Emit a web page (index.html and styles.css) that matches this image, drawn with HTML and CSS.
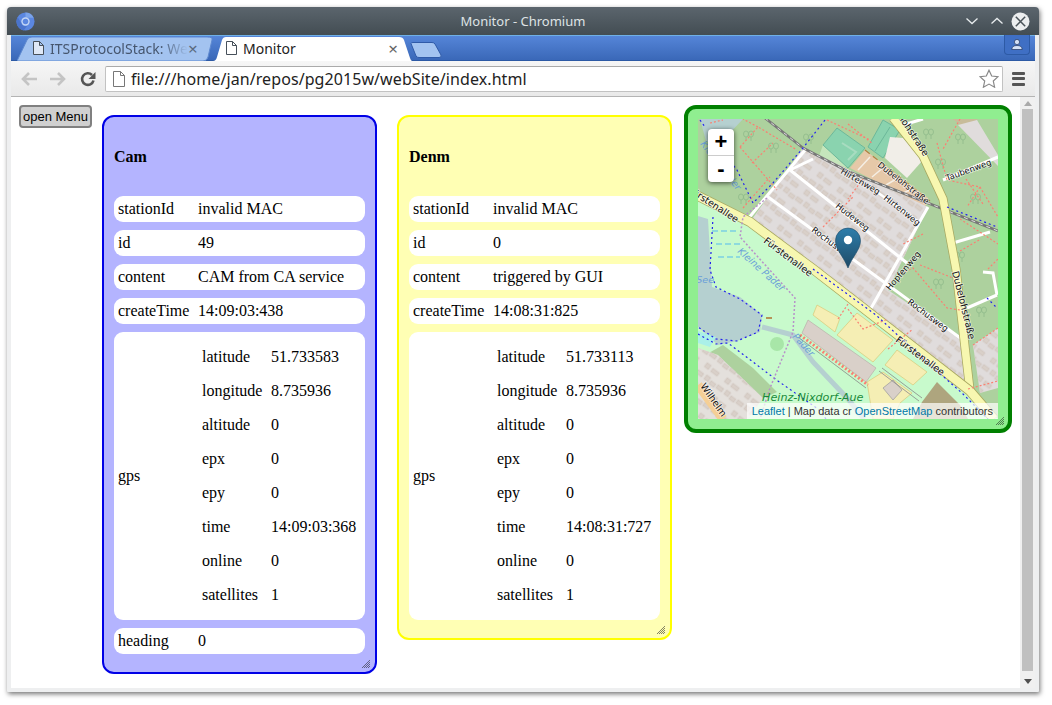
FILE: index.html
```html
<!DOCTYPE html>
<html lang="en">
<head>
<meta charset="utf-8">
<title>Monitor - Chromium</title>
<link rel="stylesheet" href="styles.css">
</head>
<body>
<div class="window">
  <header class="titlebar">
    <svg class="app-icon" width="19" height="19" viewBox="0 0 20 20"><circle cx="10" cy="10" r="9.5" fill="#5b87e0"/><path d="M10 .5a9.500 9.500 0 0 1 8.600 5.500H10z" fill="#7aa3ea"/><path d="M1.800 5.200 6 12.500a4.600 4.600 0 0 0 6 1.800l-4 5.100A9.500 9.500 0 0 1 1.800 5.200z" fill="#4a74cc"/><circle cx="10" cy="10" r="4.400" fill="#c3d6f5"/><circle cx="10" cy="10" r="2.900" fill="#5b87e0"/></svg>
    <div class="window-title">Monitor - Chromium</div>
    <div class="window-buttons">
      <svg width="14" height="8" viewBox="0 0 14 8"><path d="M1.500 1.500 7 6.500l5.500-5" fill="none" stroke="#e8ecee" stroke-width="1.300"/></svg>
      <svg width="14" height="8" viewBox="0 0 14 8"><path d="M1.500 6.500 7 1.500l5.500 5" fill="none" stroke="#e8ecee" stroke-width="1.300"/></svg>
      <svg width="19" height="19" viewBox="0 0 19 19"><circle cx="9.500" cy="9.500" r="9" fill="#eceeef"/><path d="M4.800 4.800l9.400 9.400m0-9.400-9.400 9.400" stroke="#4a5359" stroke-width="1.500"/></svg>
    </div>
  </header>
  <div class="frame">
    <div class="tabstrip">
      <div class="tab tab-back">
        <svg class="tab-shape" width="199" height="24" viewBox="0 0 199 24"><path d="M0 24 10 3Q11 0 15 0H190Q196 0 195 3L191 20Q190 24 186 24Z" fill="#a3c3f0" stroke="#5f8ad0"/></svg>
        <svg class="doc-icon" width="11" height="14" viewBox="0 0 11 14"><path d="M.5.5h6l4 4v9H.5zM6.500.5v4h4" fill="#dfe8f6" stroke="#47505a"/></svg>
        <span class="tab-label tab-label-fade">ITSProtocolStack: We</span>
        <span class="tab-close">×</span>
      </div>
      <div class="tab tab-active">
        <svg class="tab-shape" width="199" height="24" viewBox="0 0 199 24"><path d="M0 24Q3 24 4 20L9 3Q10 0 13 0H186Q190 0 191 3L197 21Q198 24 199 24Z" fill="#fff"/></svg>
        <svg class="doc-icon" width="11" height="14" viewBox="0 0 11 14"><path d="M.5.5h6l4 4v9H.5zM6.500.5v4h4" fill="#fff" stroke="#47505a"/></svg>
        <span class="tab-label">Monitor</span>
        <span class="tab-close">×</span>
      </div>
      <svg class="new-tab" width="32" height="16" viewBox="0 0 32 16"><path d="M1 1.500Q1 .5 3 .5H22Q24 .5 25 2L31 13Q32 15.500 29 15.500H9Q7 15.500 6 14Z" fill="#a3c3f0" stroke="#2f5aa8"/></svg>
      <div class="profile"><svg width="12" height="11" viewBox="0 0 12 11"><circle cx="6" cy="3" r="2.600" fill="#d5e2f7" stroke="#24365c" stroke-width=".7"/><path d="M.8 10.500Q1 6.500 6 6.500t5.200 4z" fill="#d5e2f7" stroke="#24365c" stroke-width=".7"/></svg></div>
    </div>
    <nav class="toolbar">
      <svg class="nav-icon" width="18" height="16" viewBox="0 0 18 16"><path d="M9 2 3 8l6 6M3.500 8H17" fill="none" stroke="#c4c4c4" stroke-width="2.600"/></svg>
      <svg class="nav-icon" width="18" height="16" viewBox="0 0 18 16"><path d="M9 2l6 6-6 6M14.500 8H1" fill="none" stroke="#c4c4c4" stroke-width="2.600"/></svg>
      <svg class="nav-icon" width="16" height="16" viewBox="0 0 16 16"><path d="M13.500 9.500A5.800 5.800 0 1 1 12 4" fill="none" stroke="#555" stroke-width="2.600"/><path d="M15.500 1v7h-7z" fill="#555"/></svg>
      <div class="omnibox">
        <svg class="doc-icon-url" width="12" height="16" viewBox="0 0 12 16"><path d="M.5.5h7l4 4v11H.5zM7.500.5v4h4" fill="#fff" stroke="#777"/></svg>
        <span class="url">file:///home/jan/repos/pg2015w/webSite/index.html</span>
        <svg class="star" width="20" height="19" viewBox="0 0 20 19"><path d="M10 1.200l2.700 5.800 6.300.7-4.700 4.300 1.300 6.200L10 15.100l-5.600 3.100 1.300-6.200L1 7.700l6.300-.7z" fill="#fff" stroke="#888" stroke-width="1.200"/></svg>
      </div>
      <div class="menu-icon"><i></i><i></i><i></i></div>
    </nav>
    <div class="viewport">
      <main class="page">
        <button class="open-menu" type="button">open Menu</button>
        <section class="panel panel-cam">
          <h2 class="panel-title">Cam</h2>
          <div class="row"><span class="key">stationId</span><span>invalid MAC</span></div>
          <div class="row"><span class="key">id</span><span>49</span></div>
          <div class="row"><span class="key">content</span><span>CAM from CA service</span></div>
          <div class="row"><span class="key">createTime</span><span>14:09:03:438</span></div>
          <div class="row row-gps"><span class="key">gps</span>
            <div class="gps">
              <div class="gps-row"><span class="gps-key">latitude</span><span>51.733583</span></div>
              <div class="gps-row"><span class="gps-key">longitude</span><span>8.735936</span></div>
              <div class="gps-row"><span class="gps-key">altitude</span><span>0</span></div>
              <div class="gps-row"><span class="gps-key">epx</span><span>0</span></div>
              <div class="gps-row"><span class="gps-key">epy</span><span>0</span></div>
              <div class="gps-row"><span class="gps-key">time</span><span>14:09:03:368</span></div>
              <div class="gps-row"><span class="gps-key">online</span><span>0</span></div>
              <div class="gps-row"><span class="gps-key">satellites</span><span>1</span></div>
            </div>
          </div>
          <div class="row"><span class="key">heading</span><span>0</span></div>
          <svg class="grip" width="8" height="8" viewBox="0 0 8 8"><path d="M0 8 8 0M2 8 8 2M4 8 8 4M6 8 8 6" stroke="#222" stroke-width=".8" stroke-dasharray="1 .4"/></svg>
        </section>
        <section class="panel panel-denm">
          <h2 class="panel-title">Denm</h2>
          <div class="row"><span class="key">stationId</span><span>invalid MAC</span></div>
          <div class="row"><span class="key">id</span><span>0</span></div>
          <div class="row"><span class="key">content</span><span>triggered by GUI</span></div>
          <div class="row"><span class="key">createTime</span><span>14:08:31:825</span></div>
          <div class="row row-gps"><span class="key">gps</span>
            <div class="gps">
              <div class="gps-row"><span class="gps-key">latitude</span><span>51.733113</span></div>
              <div class="gps-row"><span class="gps-key">longitude</span><span>8.735936</span></div>
              <div class="gps-row"><span class="gps-key">altitude</span><span>0</span></div>
              <div class="gps-row"><span class="gps-key">epx</span><span>0</span></div>
              <div class="gps-row"><span class="gps-key">epy</span><span>0</span></div>
              <div class="gps-row"><span class="gps-key">time</span><span>14:08:31:727</span></div>
              <div class="gps-row"><span class="gps-key">online</span><span>0</span></div>
              <div class="gps-row"><span class="gps-key">satellites</span><span>1</span></div>
            </div>
          </div>
          <svg class="grip" width="8" height="8" viewBox="0 0 8 8"><path d="M0 8 8 0M2 8 8 2M4 8 8 4M6 8 8 6" stroke="#222" stroke-width=".8" stroke-dasharray="1 .4"/></svg>
        </section>
        <section class="panel-map">
          <div class="map">
            <svg class="tiles" width="300" height="300" viewBox="0 0 300 300">
              <defs>
                <pattern id="houses" width="25" height="22" patternUnits="userSpaceOnUse" patternTransform="rotate(37)">
                  <g fill="#d9d0c9" stroke="#c9beb6" stroke-width=".5">
                    <rect x="1" y="2" width="7" height="4"/>
                    <rect x="11" y="1" width="5" height="5"/>
                    <rect x="18" y="3" width="6" height="4"/>
                    <rect x="4" y="13" width="5" height="5"/>
                    <rect x="12" y="14" width="8" height="4"/>
                  </g>
                </pattern>
                <linearGradient id="pin" x1="0" y1="0" x2="0" y2="1"><stop offset="0" stop-color="#2e7eab"/><stop offset="1" stop-color="#1f4a66"/></linearGradient>
                <g id="tree" fill="none" stroke="#8fba8a" stroke-width=".8">
                  <ellipse cx="3" cy="3" rx="2.500" ry="3"/><path d="M3 6v4"/>
                  <ellipse cx="8" cy="3" rx="2.500" ry="3"/><path d="M8 6v4"/>
                </g>
              </defs>
              <rect width="300" height="300" fill="#add19e"/>
              <path d="M0 78 52 103 115 150 272 272 300 300H0Z" fill="#c8facc"/>
              <path d="M2 0H45L30 16 26 30 8 22Z" fill="#b5d0d0"/>
              <path d="M125 26 139 9 167 29 150 49 120 40Z" fill="#c5e6bc"/>
              <path d="M139 9 167 29 150 49 125 26Z" fill="#8ad3af" stroke="#6cb89a"/>
              <path d="M144 24 158 33 150 41" fill="none" stroke="#a8dcc0" stroke-width="2"/>
              <path d="M185 1 202 11 185 39 170 28Z" fill="#8ad3af" stroke="#6cb89a"/>
              <path d="M192 8 177 32" stroke="#6cb89a"/>
              <path d="M192 18 205 19 225 41 209 59 187 39Z" fill="#f1eee8"/>
              <path d="M167 31 230 79 227 88 152 49Z" fill="#e6c8a8"/>
              <path d="M172 38 160 51M186 48 174 58M200 59 188 66M214 70 203 75" stroke="#f5eee4" stroke-width="1.500"/>
              <path d="M167 31 232 82" fill="none" stroke="#b08040" stroke-width="1.200" stroke-dasharray="6 4"/>
              <path d="M255 0H280L265 9Z" fill="#c8bc9a"/>
              <path d="M260 6 279 1 300 36V47Z" fill="#e0dcdc"/>
              <path d="M105 29 230 88 190 171 265 221 272 272 115 150 52 103 70 78Z" fill="#e0dcdc"/>
              <path d="M105 29 230 88 190 171 265 221 272 272 115 150 52 103 70 78Z" fill="url(#houses)"/>
              <path d="M275 226 300 209V269L282 274Z" fill="#e0dcdc"/>
              <path d="M275 226 300 209V269L282 274Z" fill="url(#houses)"/>
              <use href="#tree" x="45" y="12"/><use href="#tree" x="70" y="24"/><use href="#tree" x="105" y="15"/><use href="#tree" x="225" y="10"/><use href="#tree" x="257" y="15"/><use href="#tree" x="237" y="40"/><use href="#tree" x="272" y="75"/><use href="#tree" x="256" y="133"/><use href="#tree" x="235" y="160"/><use href="#tree" x="260" y="186"/><use href="#tree" x="278" y="188"/><use href="#tree" x="40" y="75"/>
              <path d="M0 97 10 100 14 168 42 178 64 196 62 213 39 222 20 226 0 208Z" fill="#b5d0d0"/>
              <path d="M0 212 18 218 12 228 0 224Z" fill="#aaf0e8"/>
              <path d="M64 208 95 216 115 243 150 280 166 300" fill="none" stroke="#b5d0d0" stroke-width="5"/>
              <circle cx="79" cy="225" r="7" fill="#a8e6a8"/>
              <path d="M25 226 55 249 79 273 50 286 0 240Z" fill="#add19e"/>
              <path d="M0 229 20 236 65 279 50 300H0Z" fill="#e4e0dc"/>
              <path d="M0 229 20 236 65 279 50 300H0Z" fill="url(#houses)"/>
              <path d="M110 201 178 249 168 263 104 214Z" fill="#d9d0c9" stroke="#b9b0a9" stroke-width=".7"/>
              <path d="M119 186 142 199 137 213 115 196ZM159 194 195 221 175 243 139 216ZM199 231 229 253 215 266 187 246ZM169 263 185 253 214 274 202 284 195 300H175Z" fill="#f5eeb4" stroke="#d8c878" stroke-width=".7"/>
              <path d="M185 269 195 261 204 271 195 281Z" fill="#d9d0c9" stroke="#999" stroke-width=".7"/>
              <path d="M239 263 262 286 270 300H215L224 283Z" fill="#aea57e"/>
              <path d="M102 216 170 266" fill="none" stroke="#fa8072" stroke-width="3" stroke-dasharray="2 2"/>
              <path d="M100 218 168 269M184 249 224 279M181 252 221 282" fill="none" stroke="#888" stroke-width=".8"/>
              <path d="M92 51 209 144M70 78 265 221M108 30 68 78 50 100M115 40 92 51M172 191 230 88M245 61 300 38M205 6 225 0M255 124 292 113M269 189 299 176M285 153 295 154 299 176" fill="none" stroke="#fff" stroke-width="3"/>
              <path d="M179 73 222 104" fill="none" stroke="#fff" stroke-width="2.500"/>
              <path d="M67 -1 105 29 149 52 245 90 300 112" fill="none" stroke="#777" stroke-width="2.600"/>
              <path d="M67 -1 105 29 149 52 245 90 300 112" fill="none" stroke="#ddd" stroke-width="1" stroke-dasharray="4 4"/>
              <path d="M195 -1 225 37 245 80 258 150 272 272" fill="none" stroke="#a8a860" stroke-width="9"/>
              <path d="M195 -1 225 37 245 80 258 150 272 272" fill="none" stroke="#f7f7b0" stroke-width="7.500"/>
              <path d="M0 77 52 103 115 150 272 272 296 300" fill="none" stroke="#a8a860" stroke-width="10"/>
              <path d="M0 77 52 103 115 150 272 272 296 300" fill="none" stroke="#f7f7b0" stroke-width="8.500"/>
              <path d="M0 266 25 300" fill="none" stroke="#f5cf95" stroke-width="9"/>
              <g fill="none" stroke="#fa8072" stroke-width="1.200" stroke-dasharray="2 2">
                <path d="M12 4 25 1M42 28 60 8 99 31M42 28 79 71M54 44 75 24M45 89 72 58M129 1 172 21M150 5 175 25"/>
                <path d="M239 24 249 61 282 68 300 98M282 68 269 88M200 156 215 149 249 189 262 191M222 146 255 159M275 226 300 209M125 108 155 78"/>
                <path d="M262 0 245 30M262 100 300 125M262 132 283 120M225 115 205 125M150 190 165 210 190 200M190 230 215 210M150 185 140 200M270 270 300 262"/>
                <path d="M290 150 300 140M268 60 285 85M60 8 45 0M165 60 150 80"/>
              </g>
              <g fill="none" stroke="#2222ee" stroke-width="1.200" stroke-dasharray="2 3">
                <path d="M2 1 7 8M127 1 105 29 75 64 55 84 39 51 35 46"/>
                <path d="M15 98 12 151 18 168 42 180 64 196 60 213 39 222 18 220 0 208"/>
                <path d="M0 215 18 225 30 224 80 262 120 290 128 300"/>
                <path d="M115 150 178 196 220 235 265 275 290 300"/>
                <path d="M249 88 299 108M289 179 299 189"/>
              </g>
              <path d="M69 79 45 98 42 118 69 148 97 179 95 213 72 269 62 300" fill="none" stroke="#b792c9" stroke-width="1.500" stroke-dasharray="2 2"/>
              <path d="M14 112H40M18 125H45M20 138H42" stroke="#55bbee" stroke-width="1" stroke-dasharray="6 3"/>
              <path d="M68 199h6" stroke="#b07030" stroke-width="1.500"/>
              <text class="lbl" transform="translate(226 38) rotate(57)" text-anchor="end">Dubelohstraße</text>
              <text class="lbl lbl-s" transform="translate(179 47) rotate(38)">Dubelohstraße</text>
              <text class="lbl lbl-s" transform="translate(249 62) rotate(-20)">Taubenweg</text>
              <text class="lbl lbl-s" transform="translate(142 54) rotate(30)">Hirtenweg</text>
              <text class="lbl lbl-s" transform="translate(185 80) rotate(38)">Hirtenweg</text>
              <text class="lbl lbl-s" transform="translate(137 88) rotate(38)">Hudeweg</text>
              <text class="lbl lbl-s" transform="translate(113 112) rotate(37)">Rochusweg</text>
              <text class="lbl lbl-s" transform="translate(209 184) rotate(37)">Rochusweg</text>
              <text class="lbl lbl-s" transform="translate(192 172) rotate(-50)">Hopfenweg</text>
              <text class="lbl" transform="translate(65 123) rotate(37)">Fürstenallee</text>
              <text class="lbl" transform="translate(38 104) rotate(33)" text-anchor="end">Fürstenallee</text>
              <text class="lbl" transform="translate(197 222) rotate(37)">Fürstenallee</text>
              <text class="lbl" transform="translate(254 153) rotate(76)">Dubelohstraße</text>
              <text class="lbl" transform="translate(2 267) rotate(55)">Wilhelm</text>
              <text class="lbl-water" transform="translate(2 25) rotate(52)">Kleine Pader</text>
              <text class="lbl-water" transform="translate(39 133) rotate(42)">Kleine Pader</text>
              <text class="lbl-water" transform="translate(94 218) rotate(47)">Pader</text>
              <text class="lbl-water" x="16" y="164" text-anchor="end">See</text>
              <text class="lbl-park" x="64" y="282">Heinz-Nixdorf-Aue</text>
              <path d="M150 149C146 138 137.500 131 137.500 121.500A12.500 12.500 0 0 1 162.500 121.500C162.500 131 154 138 150 149Z" fill="url(#pin)" stroke="#1d4a68" stroke-width=".6"/>
              <circle cx="150" cy="121" r="4.200" fill="#fff"/>
            </svg>
            <div class="zoom-control"><span class="zoom-btn zoom-in">+</span><span class="zoom-btn">-</span></div>
            <div class="attribution"><a class="attr-link">Leaflet</a> | Map data cr <a class="attr-link">OpenStreetMap</a> contributors</div>
          </div>
          <svg class="grip grip-map" width="8" height="8" viewBox="0 0 8 8"><path d="M0 8 8 0M2 8 8 2M4 8 8 4M6 8 8 6" stroke="#222" stroke-width=".8" stroke-dasharray="1 .4"/></svg>
        </section>
      </main>
      <div class="scrollbar">
        <span class="arrow arrow-up"></span>
        <span class="thumb"></span>
        <span class="arrow arrow-down"></span>
      </div>
    </div>
  </div>
</div>
</body>
</html>
```
FILE: styles.css
```css
* { box-sizing: border-box; }
html, body { margin: 0; height: 100%; overflow: hidden; background: #fff; }
body { padding: 7px 0 0 7px; }

.window {
  width: 1032px;
  height: 685px;
  display: flex;
  flex-direction: column;
  border-radius: 4px 4px 1px 1px;
  box-shadow: 1px 2px 5px rgba(0, 0, 0, .55);
  background: #eeeff0;
  font-family: "Noto Sans", sans-serif;
}

.titlebar {
  height: 28px;
  flex: none;
  display: grid;
  grid-template-columns: 1fr auto 1fr;
  align-items: center;
  padding: 0 9px;
  border-radius: 4px 4px 0 0;
  background: linear-gradient(#5b656d, #434d53);
}
.app-icon { display: block; }
.window-title {
  text-align: center;
  color: #dfe3e5;
  font-size: 13px;
}
.window-buttons { display: flex; align-items: center; justify-content: flex-end; gap: 7px; }
.window-buttons svg:first-child { margin-right: 4px; }

.frame {
  flex: 1;
  display: flex;
  flex-direction: column;
  padding: 0 4px 4px;
  min-height: 0;
}

.tabstrip {
  height: 26px;
  flex: none;
  display: flex;
  padding: 1px 0 0 6px;
  position: relative;
  border-top: 1px solid #6fb0e6;
  background: linear-gradient(#5585d8, #3a68b8);
  border-bottom: 1px solid #2d5aa5;
}
.tab {
  width: 199px;
  height: 24px;
  flex: none;
  position: relative;
  display: flex;
  align-items: center;
  padding-bottom: 2px;
  font-size: 14px;
  color: #222;
}
.tab-shape { position: absolute; left: 0; top: 0; }
.tab-active { margin-left: -3px; padding-left: 13px; }
.tab-back { padding-left: 16px; color: #46566e; }
.doc-icon { position: relative; flex: none; margin-right: 6px; }
.tab-label { position: relative; flex: 1; white-space: nowrap; }
.tab-label-fade {
  flex: none;
  width: 138px;
  -webkit-mask-image: linear-gradient(90deg, #000 80%, transparent);
  mask-image: linear-gradient(90deg, #000 80%, transparent);
}
.tab-close { position: relative; font-size: 17px; color: #666; line-height: 1; margin-right: 14px; margin-left: 6px; }
.tab-back .tab-close { margin-right: 8px; margin-left: 0; color: #5b6b80; }
.new-tab { margin: 5px 0 0 -2px; flex: none; }
.profile {
  position: absolute;
  right: 5px;
  top: -1px;
  width: 26px;
  height: 20px;
  display: flex;
  align-items: center;
  justify-content: center;
  border: 1px solid #2d5aa5;
  border-top: 0;
  border-radius: 0 0 4px 4px;
  background: #3f6fc4;
}

.toolbar {
  height: 36px;
  flex: none;
  display: flex;
  align-items: center;
  padding-left: 9px;
  background: linear-gradient(#f6f6f6, #e9e9e9);
  border-bottom: 1px solid #b4b4b4;
}
.nav-icon { flex: none; margin-right: 11px; }
.nav-icon:nth-child(3) { margin-left: 2px; margin-right: 9px; }
.omnibox {
  width: 898px;
  height: 26px;
  flex: none;
  display: flex;
  align-items: center;
  padding: 0 3px 0 7px;
  background: #fff;
  border: 1px solid #c2c2c2;
  border-top-color: #aaa;
  border-radius: 2px;
}
.doc-icon-url { flex: none; margin-right: 6px; }
.url { flex: 1; font-size: 16px; letter-spacing: .08px; color: #222; white-space: nowrap; line-height: 24px; }
.star { flex: none; }
.menu-icon { display: flex; flex-direction: column; gap: 2.500px; margin-left: 9px; }
.menu-icon i { display: block; width: 13px; height: 3px; border-radius: 1px; background: #555; }

.viewport { flex: 1; display: flex; min-height: 0; background: #fff; }
.page {
  flex: 1;
  display: flex;
  align-items: flex-start;
  padding: 8px 0 0 8px;
  font-family: "Liberation Serif", serif;
  font-size: 16px;
  color: #000;
  min-width: 0;
}
.open-menu {
  width: 73px;
  height: 23px;
  flex: none;
  padding: 0;
  margin-right: 10px;
  font: 13px "Liberation Sans", sans-serif;
  color: #000;
  background: #d0d0d0;
  border: 2px solid #808080;
  border-radius: 4px;
}

.panel {
  width: 275px;
  flex: none;
  position: relative;
  margin-top: 10px;
  padding: 0 10px 10px;
  border: 2px solid;
  border-radius: 12px;
}
.panel-cam { background: #b4b4ff; border-color: #0000e6; margin-right: 20px; }
.panel-denm { background: #ffffb4; border-color: #ffff00; margin-right: 12px; }
.panel-title {
  height: 79px;
  margin: 0;
  display: flex;
  align-items: center;
  padding-top: 1px;
  font-size: 16px;
  font-weight: bold;
}
.row {
  display: flex;
  align-items: center;
  min-height: 26px;
  margin-bottom: 8px;
  padding-left: 4px;
  background: #fff;
  border-radius: 9px;
  line-height: 26px;
}
.key { width: 80px; flex: none; }
.gps { padding: 12px 0 12px 4px; display: flex; flex-direction: column; gap: 8px; }
.gps-row { display: flex; height: 26px; }
.gps-key { width: 69px; flex: none; }
.grip { position: absolute; right: 5px; bottom: 4px; }

.panel-map {
  width: 328px;
  height: 328px;
  flex: none;
  position: relative;
  padding: 10px;
  background: #90ee90;
  border: 4px solid #008000;
  border-radius: 12px;
}
.grip-map { right: 4px; bottom: 4px; }
.map { width: 300px; height: 300px; position: relative; overflow: hidden; }
.tiles { display: block; }
.lbl {
  font: 9.500px "DejaVu Sans", sans-serif;
  fill: #111;
  stroke: #fff;
  stroke-width: 1.500px;
  stroke-opacity: .6;
  paint-order: stroke;
}
.lbl-s { font-size: 8.500px; }
.lbl-water { font: italic 9.500px "DejaVu Sans", sans-serif; fill: #6a9fd8; }
.lbl-park { font: italic 11.200px "DejaVu Sans", sans-serif; fill: #1a8a3a; }
.zoom-control {
  position: absolute;
  left: 10px;
  top: 10px;
  width: 26px;
  display: flex;
  flex-direction: column;
  background: #fff;
  border-radius: 4px;
  box-shadow: 0 1px 5px rgba(0, 0, 0, .65);
}
.zoom-btn {
  height: 26px;
  text-align: center;
  font: bold 22px/26px "Liberation Sans", sans-serif;
  color: #000;
}
.zoom-in { border-bottom: 1px solid #ccc; height: 27px; }
.attribution {
  position: absolute;
  right: 0;
  bottom: 0;
  padding: 0 5px;
  background: rgba(255, 255, 255, .7);
  font: 11px/16px "Liberation Sans", sans-serif;
  color: #333;
  white-space: nowrap;
}
.attr-link { color: #0078a8; }

.scrollbar {
  width: 15px;
  flex: none;
  display: flex;
  flex-direction: column;
  align-items: center;
  padding-top: 3px;
  background: #f0f0f0;
}
.arrow { width: 0; height: 0; flex: none; border-left: 4px solid transparent; border-right: 4px solid transparent; }
.arrow-up { border-bottom: 5px solid #aaa; margin: 1px 0 3px; }
.thumb { width: 11px; height: 562px; flex: none; background: #c0c0c0; }
.arrow-down { border-top: 5px solid #505050; margin-top: 8px; }
```
